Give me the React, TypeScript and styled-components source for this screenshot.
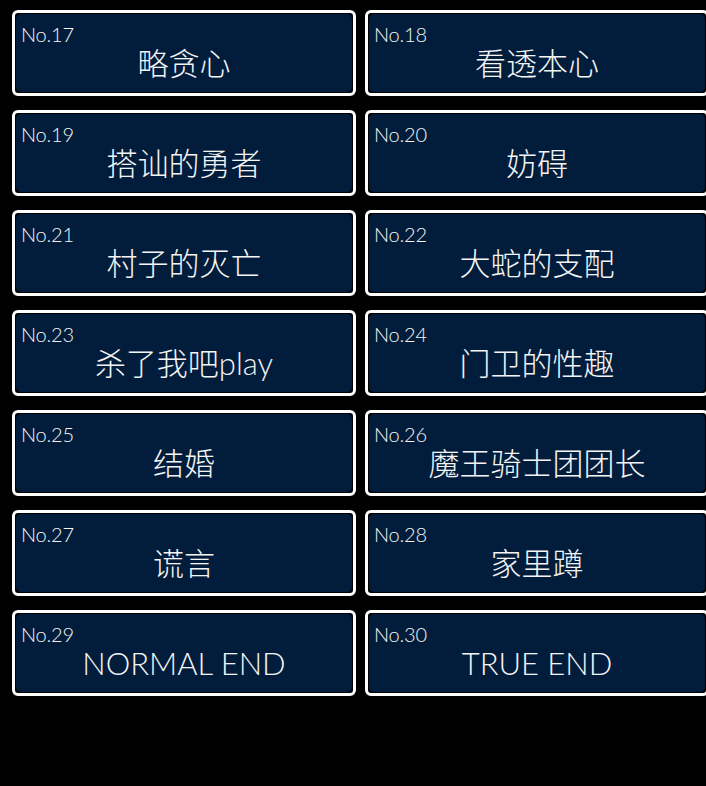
import styled, { createGlobalStyle } from "styled-components";

const GlobalStyle = createGlobalStyle`
  html, body {
    margin: 0;
    padding: 0;
    background: #000;
    overflow: hidden;
  }
`;

type Ending = { no: number; title: string };

const endings: Ending[] = [
  { no: 17, title: "略贪心" },
  { no: 18, title: "看透本心" },
  { no: 19, title: "搭讪的勇者" },
  { no: 20, title: "妨碍" },
  { no: 21, title: "村子的灭亡" },
  { no: 22, title: "大蛇的支配" },
  { no: 23, title: "杀了我吧play" },
  { no: 24, title: "门卫的性趣" },
  { no: 25, title: "结婚" },
  { no: 26, title: "魔王骑士团团长" },
  { no: 27, title: "谎言" },
  { no: 28, title: "家里蹲" },
  { no: 29, title: "NORMAL END" },
  { no: 30, title: "TRUE END" },
];

const Grid = styled.div`
  display: grid;
  grid-template-columns: 344px 344px;
  column-gap: 9px;
  row-gap: 14px;
  padding: 10px 0 0 12px;
  width: 709px;
  font-family: Lato, "Noto Sans CJK SC", sans-serif;
  font-weight: 300;
  color: #f4f4f4;
`;

const Card = styled.div`
  box-sizing: border-box;
  height: 86px;
  border: 3px solid #fff;
  border-radius: 6px;
  padding: 1px;
  background: #000;
`;

const Face = styled.div`
  height: 100%;
  border-radius: 5px;
  background: #021d3b;
  display: flex;
  flex-direction: column;
`;

const Number = styled.div`
  font-size: 20px;
  line-height: 22px;
  padding: 9px 0 0 5px;
  letter-spacing: -0.2px;
`;

const Title = styled.div`
  font-size: 31px;
  line-height: 34px;
  text-align: center;
  margin-top: 1px;
`;

export default function App() {
  return (
    <>
      <GlobalStyle />
      <Grid>
        {endings.map((e) => (
          <Card key={e.no}>
            <Face>
              <Number>No.{e.no}</Number>
              <Title>{e.title}</Title>
            </Face>
          </Card>
        ))}
      </Grid>
    </>
  );
}
